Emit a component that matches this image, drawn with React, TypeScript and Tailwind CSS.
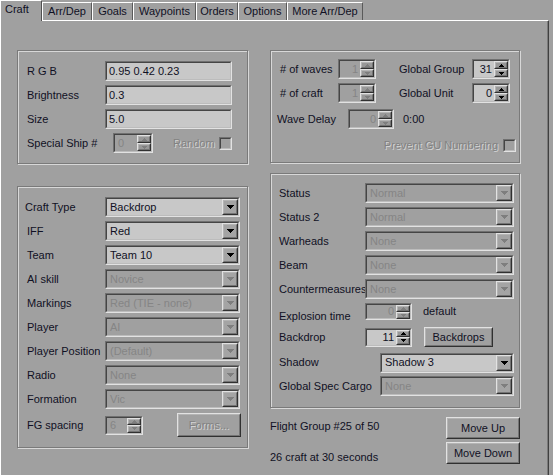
import React from "react";

// classic win32 look on a darker gray face
const GROUP =
  "border border-[#7a7a7a] shadow-[inset_1px_1px_0_#d8d8d8,1px_1px_0_#d8d8d8]";
const EMBOSS = "text-[#828282] [text-shadow:1px_1px_0_#d4d4d4]";
const DIS = "text-[#858585]";

interface BoxProps {
    className?: string;
    children?: React.ReactNode;
}

function Sunken({ className = "", children }: BoxProps) {
    return (
        <div className={`flex border border-t-[#707070] border-l-[#707070] border-b-[#e2e2e2] border-r-[#e2e2e2] ${className}`}>
            <div className="flex-1 flex items-center min-w-0 border border-t-[#454545] border-l-[#454545] border-b-[#bcbcbc] border-r-[#bcbcbc]">
                {children}
            </div>
        </div>
    );
}

function Raised({ className = "", children }: BoxProps) {
    return (
        <div className={`flex border border-t-[#e2e2e2] border-l-[#e2e2e2] border-b-[#303030] border-r-[#303030] ${className}`}>
            <div className="flex-1 flex items-center justify-center min-w-0 border border-t-[#b4b4b4] border-l-[#b4b4b4] border-b-[#747474] border-r-[#747474]">
                {children}
            </div>
        </div>
    );
}

function Tri({ up = false, color = "#000", w = 7, h = 4 }: { up?: boolean; color?: string; w?: number; h?: number }) {
    const pts = up ? `0,${h} ${w / 2},0 ${w},${h}` : `0,0 ${w},0 ${w / 2},${h}`;
    return (
        <svg width={w} height={h} viewBox={`0 0 ${w} ${h}`} shapeRendering="crispEdges">
            <polygon points={pts} fill={color} />
        </svg>
    );
}

function Field({ value, w }: { value: string; w: string }) {
    return (
        <Sunken className={`${w} h-[20px] bg-[#c8c8c8]`}>
            <span className="pl-[2px] whitespace-nowrap">{value}</span>
        </Sunken>
    );
}

function Select({ value, w, disabled = false }: { value: string; w: string; disabled?: boolean }) {
    return (
        <Sunken className={`${w} h-[20px] ${disabled ? "bg-[#a0a0a0]" : "bg-[#c8c8c8]"}`}>
            <span className={`flex-1 pl-[3px] whitespace-nowrap overflow-hidden ${disabled ? DIS : ""}`}>{value}</span>
            <Raised className="w-[16px] self-stretch bg-[#a4a4a4]">
                <Tri color={disabled ? "#7e7e7e" : "#000"} />
            </Raised>
        </Sunken>
    );
}

function Spinner({ value, w, h = "h-[20px]", disabled = false, left = false }: { value: string; w: string; h?: string; disabled?: boolean; left?: boolean }) {
    return (
        <Sunken className={`${w} ${h} shrink-0 ${disabled ? "bg-[#a0a0a0]" : "bg-[#c8c8c8]"}`}>
            <span className={`flex-1 ${left ? "pl-[3px] text-left" : "pr-[2px] text-right"} ${disabled ? DIS : ""}`}>{value}</span>
            <div className="w-[14px] self-stretch flex flex-col">
                <Raised className="flex-1 bg-[#989898]">
                    <Tri up w={5} h={3} color={disabled ? "#7e7e7e" : "#000"} />
                </Raised>
                <Raised className="flex-1 bg-[#989898]">
                    <Tri w={5} h={3} color={disabled ? "#7e7e7e" : "#000"} />
                </Raised>
            </div>
        </Sunken>
    );
}

function Checkbox({ className = "" }: { className?: string }) {
    return <Sunken className={`w-[13px] h-[13px] shrink-0 bg-[#a0a0a0] ${className}`} />;
}

function Button({ label, className = "", disabled = false }: { label: string; className?: string; disabled?: boolean }) {
    return (
        <Raised className={`bg-[#a0a0a0] ${className}`}>
            <span className={`whitespace-nowrap ${disabled ? EMBOSS : ""}`}>{label}</span>
        </Raised>
    );
}

function Row({ label, lw, children, className = "" }: { label: string; lw: string; children?: React.ReactNode; className?: string }) {
    return (
        <div className={`flex items-center h-[20px] ${className}`}>
            <span className={`${lw} shrink-0 whitespace-nowrap`}>{label}</span>
            {children}
        </div>
    );
}

const tabs = [
    { label: "Arr/Dep", w: "w-[50px]" },
    { label: "Goals", w: "w-[41px]" },
    { label: "Waypoints", w: "w-[63px]" },
    { label: "Orders", w: "w-[42px]" },
    { label: "Options", w: "w-[49px]" },
    { label: "More Arr/Dep", w: "w-[76px]" },
];

export default function App() {
    return (
        <div className="w-[553px] h-[475px] overflow-hidden bg-[#a0a0a0] text-[11px] leading-[13px] text-[#101024] font-['Liberation_Sans',Arial,sans-serif]">
            {/* Tab strip */}
            <div className="relative z-10 flex items-end h-[20px]">
                <div className="h-[21px] -mb-px w-[42px] bg-[#a0a0a0] border-l border-t border-r border-l-white border-t-white border-r-[#505050] pl-[4px] pt-[2px]">
                    Craft
                </div>
                {tabs.map(t => (
                    <div
                        key={t.label}
                        className={`h-[18px] ${t.w} border-l border-t border-r border-l-white border-t-white border-r-[#5a5a5a] flex items-center justify-center whitespace-nowrap`}
                    >
                        {t.label}
                    </div>
                ))}
            </div>

            {/* Tab page */}
            <div className="w-[549px] h-[455px] flex border-l border-t border-r border-l-white border-t-white border-r-[#404040] shadow-[inset_-1px_0_0_#7a7a7a]">
                {/* Left column */}
                <div className="ml-[16px] mt-[29px] w-[231px] flex flex-col gap-[22px]">
                    <div className={`${GROUP} h-[114px] pt-[10px] pl-[9px] flex flex-col gap-[4px]`}>
                        <Row label="R G B" lw="w-[78px]"><Field value="0.95 0.42 0.23" w="w-[127px]" /></Row>
                        <Row label="Brightness" lw="w-[78px]"><Field value="0.3" w="w-[127px]" /></Row>
                        <Row label="Size" lw="w-[78px]"><Field value="5.0" w="w-[127px]" /></Row>
                        <Row label="Special Ship #" lw="w-[86px]">
                            <Spinner value="0" w="w-[40px]" disabled left />
                            <span className={`ml-[20px] w-[46px] ${EMBOSS}`}>Random</span>
                            <Checkbox />
                        </Row>
                    </div>

                    <div className={`${GROUP} h-[262px] pt-[10px] pl-[9px] flex flex-col gap-[4px]`}>
                        <Row label="Craft Type" lw="w-[80px]" className="-ml-[2px]"><Select value="Backdrop" w="w-[135px]" /></Row>
                        <Row label="IFF" lw="w-[78px]"><Select value="Red" w="w-[135px]" /></Row>
                        <Row label="Team" lw="w-[78px]"><Select value="Team 10" w="w-[135px]" /></Row>
                        <Row label="AI skill" lw="w-[78px]"><Select value="Novice" w="w-[135px]" disabled /></Row>
                        <Row label="Markings" lw="w-[78px]"><Select value="Red (TIE - none)" w="w-[135px]" disabled /></Row>
                        <Row label="Player" lw="w-[78px]"><Select value="AI" w="w-[135px]" disabled /></Row>
                        <Row label="Player Position" lw="w-[78px]"><Select value="(Default)" w="w-[135px]" disabled /></Row>
                        <Row label="Radio" lw="w-[78px]"><Select value="None" w="w-[135px]" disabled /></Row>
                        <Row label="Formation" lw="w-[78px]"><Select value="Vic" w="w-[135px]" disabled /></Row>
                        <div className="flex items-center h-[24px]">
                            <span className="w-[78px] shrink-0">FG spacing</span>
                            <Spinner value="6" w="w-[38px]" h="h-[19px]" disabled left />
                            <Button label="Forms..." className="ml-[34px] w-[64px] h-[24px]" disabled />
                        </div>
                    </div>
                </div>

                {/* Right column */}
                <div className="ml-[22px] mt-[29px] w-[250px] flex flex-col">
                    <div className={`${GROUP} h-[113px] pt-[8px] pl-[9px] flex flex-col`}>
                        <div className="flex items-center h-[20px]">
                            <span className="w-[58px] shrink-0"># of waves</span>
                            <Spinner value="1" w="w-[38px]" disabled />
                            <span className="ml-[23px] w-[73px] shrink-0">Global Group</span>
                            <Spinner value="31" w="w-[38px]" />
                        </div>
                        <div className="flex items-center h-[20px] mt-[4px]">
                            <span className="w-[58px] shrink-0"># of craft</span>
                            <Spinner value="1" w="w-[38px]" disabled />
                            <span className="ml-[23px] w-[73px] shrink-0">Global Unit</span>
                            <Spinner value="0" w="w-[38px]" />
                        </div>
                        <div className="flex items-center h-[20px] mt-[6px] -ml-[3px]">
                            <span className="w-[71px] shrink-0">Wave Delay</span>
                            <Spinner value="0" w="w-[46px]" disabled />
                            <span className="ml-[9px]">0:00</span>
                        </div>
                        <div className="flex items-center justify-end h-[13px] mt-[10px] pr-[3px]">
                            <span className={EMBOSS}>Prevent GU Numbering</span>
                            <Checkbox className="ml-[5px]" />
                        </div>
                    </div>

                    <div className={`${GROUP} h-[235px] mt-[10px] pt-[9px] pl-[8px] flex flex-col gap-[4px]`}>
                        <Row label="Status" lw="w-[86px]"><Select value="Normal" w="w-[149px]" disabled /></Row>
                        <Row label="Status 2" lw="w-[86px]"><Select value="Normal" w="w-[149px]" disabled /></Row>
                        <Row label="Warheads" lw="w-[86px]"><Select value="None" w="w-[149px]" disabled /></Row>
                        <Row label="Beam" lw="w-[86px]"><Select value="None" w="w-[149px]" disabled /></Row>
                        <Row label="Countermeasures" lw="w-[86px]"><Select value="None" w="w-[149px]" disabled /></Row>
                        <div className="flex items-start h-[20px]">
                            <span className="w-[86px] shrink-0 mt-[7px] whitespace-nowrap">Explosion time</span>
                            <Spinner value="0" w="w-[47px]" h="h-[17px]" disabled />
                            <span className="ml-[11px] mt-[2px]">default</span>
                        </div>
                        <Row label="Backdrop" lw="w-[86px]">
                            <Spinner value="11" w="w-[47px]" h="h-[19px]" />
                            <Button label="Backdrops" className="ml-[12px] w-[69px] h-[20px]" />
                        </Row>
                        <div className="flex items-center h-[21px] mt-[1px]">
                            <span className="w-[101px] shrink-0">Shadow</span>
                            <Select value="Shadow 3" w="w-[134px]" />
                        </div>
                        <div className="flex items-center h-[20px] -mt-[1px]">
                            <span className="w-[101px] shrink-0 whitespace-nowrap">Global Spec Cargo</span>
                            <Select value="None" w="w-[134px]" disabled />
                        </div>
                    </div>

                    <div className="flex justify-between mt-[9px]">
                        <div className="flex flex-col pt-[3px]">
                            <span>Flight Group #25 of 50</span>
                            <span className="mt-[18px]">26 craft at 30 seconds</span>
                        </div>
                        <div className="flex flex-col gap-[3px]">
                            <Button label="Move Up" className="w-[74px] h-[22px]" />
                            <Button label="Move Down" className="w-[74px] h-[22px]" />
                        </div>
                    </div>
                </div>
            </div>
        </div>
    );
}
